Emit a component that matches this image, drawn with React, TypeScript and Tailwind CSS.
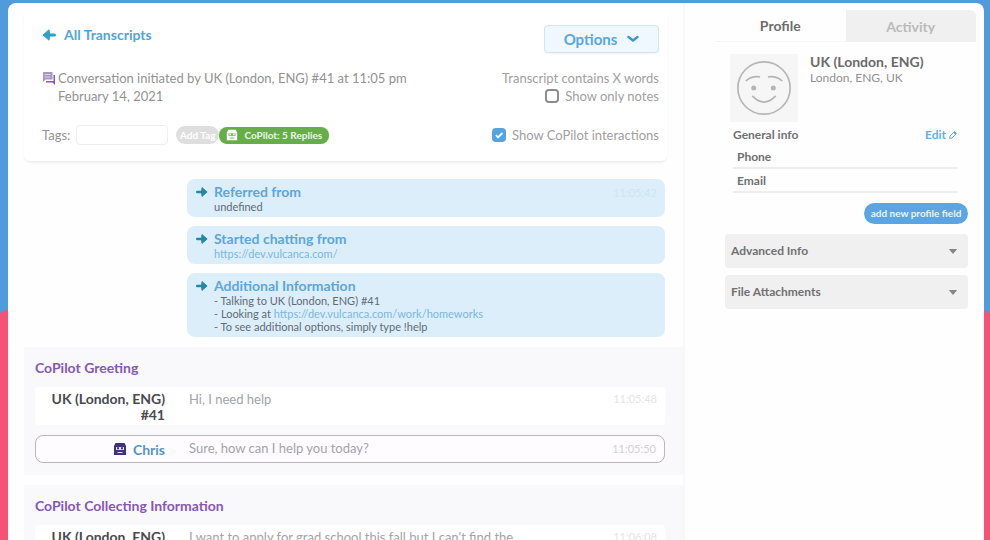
import type { ReactNode } from 'react';

function ArrowIcon({ className }: { className?: string }) {
  return (
    <svg viewBox="0 0 14 14" className={className} aria-hidden="true">
      <path d="M1.500 7h8" stroke="currentColor" strokeWidth="3" strokeLinecap="round" />
      <path d="M7 1.800 13 7 7 12.200Q5.600 7 7 1.800Z" fill="currentColor" stroke="currentColor" strokeLinejoin="round" />
    </svg>
  );
}

function ChatIcon() {
  return (
    <svg viewBox="0 0 14 14" className="mt-0.5 size-3.5 shrink-0" aria-hidden="true">
      <path d="M1 1h9.500v7.500H3.500L1 11Z" fill="#a497c4" />
      <path d="M2.500 3.500h6M2.500 6h6" stroke="#e9e4f3" strokeWidth="0.800" />
      <path d="M11.500 4H13v10l-2.500-2.500H4V10h7.500Z" fill="#8a58b0" />
    </svg>
  );
}

function BotIcon({ className, face }: { className?: string; face: string }) {
  return (
    <svg viewBox="0 0 14 14" className={className} aria-hidden="true">
      <path d="M2.500 1h9L13 4v9H1V4Z" fill="currentColor" />
      <path d="M3 5h8v3H3Z" fill={face} />
      <path d="M5 5.300v2M9 5.300v2" stroke="currentColor" strokeWidth="2" />
      <path d="M4.500 10.500h5" stroke={face} strokeWidth="1" />
    </svg>
  );
}

function SmileyIcon() {
  return (
    <svg viewBox="0 0 60 60" className="size-14" fill="none" stroke="#b5b5b5" strokeWidth="1.800" strokeLinecap="round" aria-hidden="true">
      <circle cx="30" cy="30" r="28" />
      <path d="M11 22q6-5 14-4M35 18q8-1 14 4M18 39q12 12 24 0" />
      <circle cx="19" cy="30" r="1.800" fill="#b5b5b5" />
      <circle cx="40" cy="30" r="1.800" fill="#b5b5b5" />
    </svg>
  );
}

function EditIcon() {
  return (
    <svg viewBox="0 0 10 10" className="size-2.5" fill="none" stroke="currentColor" aria-hidden="true">
      <path d="m1.500 8.500.5-2.500 4.500-4.500 2 2L4 8Z" strokeLinejoin="round" />
      <path d="m6 2 2 2" strokeWidth="2" />
    </svg>
  );
}

function InfoBox({ title, children, time }: { title: string; children: ReactNode; time?: string }) {
  return (
    <section className="flex gap-1.5 rounded-lg bg-[#dbeefa] py-1 pr-2 pl-[9px] text-[#626b75]">
      <ArrowIcon className="mt-[3px] size-3 shrink-0 text-[#2587a8]" />
      <div className="grow">
        <h2 className="text-[14px] leading-[17px] font-bold text-[#5ca6dc]">{title}</h2>
        <div className="text-[11px] leading-[13px]">{children}</div>
      </div>
      {time && <time className="mt-0.5 text-[11px] leading-4 text-[#d0e4f1]">{time}</time>}
    </section>
  );
}

function Message({ name, text, time }: { name: string; text: string; time: string }) {
  return (
    <div className="flex h-[38px] rounded-sm bg-white pt-1 pr-2">
      <strong className="w-[130px] text-right text-[14px] leading-4 text-[#4a4a4f]">{name}</strong>
      <p className="grow pl-6 text-[13px] leading-4 text-[#a3a3a8]">{text}</p>
      <time className="text-[11px] leading-4 text-[#e4e4e6]">{time}</time>
    </div>
  );
}

function Accordion({ title }: { title: string }) {
  return (
    <button type="button" className="flex h-[34px] w-full items-center justify-between rounded-sm bg-[#f0f0f0] pr-2.5 pl-1.5 text-[12px] font-bold text-[#707070]">
      {title}
      <svg viewBox="0 0 10 6" className="h-[5px] w-2.5" aria-hidden="true">
        <path d="M0 0h10L5 6Z" fill="#858585" />
      </svg>
    </button>
  );
}

function TranscriptHeader() {
  return (
    <header className="mx-4 mt-1.5 shrink-0 rounded-md bg-white pr-2 pb-4 pl-[18px] shadow-[0_2px_3px_-1px_#e6e6e6]">
      <div className="flex h-[59px] items-start justify-between pt-4">
        <a href="#transcripts" className="flex items-center gap-2 text-[14px] leading-5 font-bold text-[#4fa5d9]">
          <ArrowIcon className="size-3.5 rotate-180 text-[#2da0cf]" />
          All Transcripts
        </a>
        <button type="button" className="flex h-7 w-[115px] items-center justify-center gap-2.5 rounded-sm border border-[#d3e3f3] bg-[#eff8fe] text-[15px] font-bold text-[#5aa7de] shadow-xs">
          Options
          <svg viewBox="0 0 12 8" className="h-2 w-3" fill="none" aria-hidden="true">
            <path d="m1.500 2 4.500 3.500L10.500 2" stroke="#3b98c9" strokeWidth="2.400" strokeLinecap="round" />
          </svg>
        </button>
      </div>

      <div className="flex justify-between text-[13px] leading-[18px] text-[#929292]">
        <div className="flex gap-0.5 pt-px">
          <ChatIcon />
          <p>
            Conversation initiated by UK (London, ENG) #41 at 11:05 pm
            <br />
            February 14, 2021
          </p>
        </div>
        <div className="flex flex-col items-end pt-px text-[#a0a0a0]">
          <p>Transcript contains X words</p>
          <label className="flex items-center gap-1.5">
            <input type="checkbox" className="size-3.5 appearance-none rounded-sm border-2 border-[#8d8d8d] bg-white" />
            Show only notes
          </label>
        </div>
      </div>

      <div className="mt-5 flex items-center justify-between text-[13px] leading-4 text-[#929292]">
        <div className="flex items-center">
          <label htmlFor="tags">Tags:</label>
          <input id="tags" type="text" className="ml-1.5 h-5 w-[92px] rounded-sm border border-[#eeeeee] bg-white px-1" />
          <button type="button" className="ml-2 h-[18px] w-[43px] rounded-full bg-[#dedede] text-[10px] font-bold text-white">
            Add Tag
          </button>
          <span className="flex h-[17px] w-[110px] items-center justify-center gap-1.5 rounded-lg bg-[#68ae48] text-[10px] font-bold text-[#eaf6e4]">
            <BotIcon className="size-3 text-white" face="#68ae48" />
            CoPilot: 5 Replies
          </span>
        </div>
        <label className="flex items-center gap-1.5 text-[#a0a0a0]">
          <span className="relative flex size-3.5">
            <input type="checkbox" defaultChecked className="size-3.5 appearance-none rounded-sm bg-[#56a3e2]" />
            <svg viewBox="0 0 14 14" className="pointer-events-none absolute inset-0" fill="none" aria-hidden="true">
              <path d="m4 7 2 2.500L10.500 5" stroke="#fff" strokeWidth="1.800" />
            </svg>
          </span>
          Show CoPilot interactions
        </label>
      </div>
    </header>
  );
}

function Profile() {
  return (
    <aside className="w-[301px] shrink-0 border-l-2 border-[#f8f8fb] pt-[7px] pr-2 pl-[30px]">
      <div role="tablist" className="flex h-8 text-[14px] font-bold">
        <button type="button" role="tab" aria-selected="true" className="flex-1 border-b border-[#f4f4f4] text-[#6c6c6c]">
          Profile
        </button>
        <button type="button" role="tab" aria-selected="false" className="flex-1 rounded-tr-md bg-[#f0f0f0] text-[#bababa]">
          Activity
        </button>
      </div>

      <div className="mt-3 flex gap-3 pl-[15px]">
        <div className="flex size-[68px] items-center justify-center bg-[#f6f6f6]">
          <SmileyIcon />
        </div>
        <div>
          <h2 className="text-[14px] leading-4 font-bold text-[#6a6a6a]">UK (London, ENG)</h2>
          <p className="text-[12px] leading-4 text-[#909090]">London, ENG, UK</p>
        </div>
      </div>

      <div className="mt-[5px] flex items-center justify-between px-[18px] text-[12px] leading-4 font-bold text-[#707070]">
        <h3>General info</h3>
        <a href="#edit" className="flex items-center gap-0.5 text-[#68aee0]">
          Edit
          <EditIcon />
        </a>
      </div>
      <ul className="mx-[18px] text-[12px] leading-4 font-bold text-[#6f6f6f]">
        <li className="mt-1.5 border-b-2 border-[#ededed] pb-0.5 pl-1">Phone</li>
        <li className="mt-1 border-b-2 border-[#ededed] pb-0.5 pl-1">Email</li>
      </ul>

      <div className="mt-2.5 flex justify-end pr-2">
        <button type="button" className="h-[21px] w-[104px] rounded-full bg-[#5ba6e2] text-[10px] font-bold text-[#e8f4ff]">
          add new profile field
        </button>
      </div>
      <div className="mt-2.5 mr-2 ml-2.5 space-y-[7px]">
        <Accordion title="Advanced Info" />
        <Accordion title="File Attachments" />
      </div>
    </aside>
  );
}

export default function App() {
  return (
    <div className="relative h-screen overflow-hidden bg-[#4f9bdb] pt-[3px] pr-1.5 pl-2 font-['Lato',sans-serif]">
      <div className="absolute inset-0 bg-[#f65275] [clip-path:polygon(0_58%,50%_10%,100%_58%,100%_100%,0_100%)]" />
      <div className="relative flex h-full rounded-t-lg bg-[#fefeff]">
        <main className="flex min-w-0 grow flex-col">
          <TranscriptHeader />

          <div className="mt-[18px] mr-[18px] ml-[179px] space-y-[9px]">
            <InfoBox title="Referred from" time="11:05:42">undefined</InfoBox>
            <InfoBox title="Started chatting from">
              <a href="https://dev.vulcanca.com/" className="text-[#7bb6e0]">https://dev.vulcanca.com/</a>
            </InfoBox>
            <InfoBox title="Additional Information">
              <p>- Talking to UK (London, ENG) #41</p>
              <p>
                - Looking at{' '}
                <a href="https://dev.vulcanca.com/work/homeworks" className="text-[#7bb6e0]">
                  https://dev.vulcanca.com/work/homeworks
                </a>
              </p>
              <p>- To see additional options, simply type !help</p>
            </InfoBox>
          </div>

          <section className="mt-2.5 ml-4 h-[128px] shrink-0 bg-[#f9f9fc] pt-3 pr-[18px] pl-[11px]">
            <h2 className="mb-2.5 text-[14px] leading-[18px] font-bold text-[#8657b5]">CoPilot Greeting</h2>
            <Message name="UK (London, ENG) #41" text="Hi, I need help" time="11:05:48" />
            <div className="mt-2.5 flex h-7 items-center rounded-lg border border-[#b9b6bc] bg-[#fefcff] pr-2">
              <strong className="flex w-[129px] items-center justify-end gap-1.5 text-[14px] text-[#5793c5]">
                <BotIcon className="size-3.5 text-[#43307c]" face="#e4dcf4" />
                Chris
              </strong>
              <p className="grow pl-6 text-[13px] text-[#a3a3a8]">Sure, how can I help you today?</p>
              <time className="text-[11px] text-[#d2d0d5]">11:05:50</time>
            </div>
          </section>

          <section className="mt-2.5 ml-4 shrink-0 bg-[#f9f9fc] pt-3 pr-[18px] pl-[11px]">
            <h2 className="mb-2.5 text-[14px] leading-[18px] font-bold text-[#8657b5]">CoPilot Collecting Information</h2>
            <Message
              name="UK (London, ENG) #41"
              text="I want to apply for grad school this fall but I can't find the"
              time="11:06:08"
            />
          </section>
        </main>
        <Profile />
      </div>
    </div>
  );
}
